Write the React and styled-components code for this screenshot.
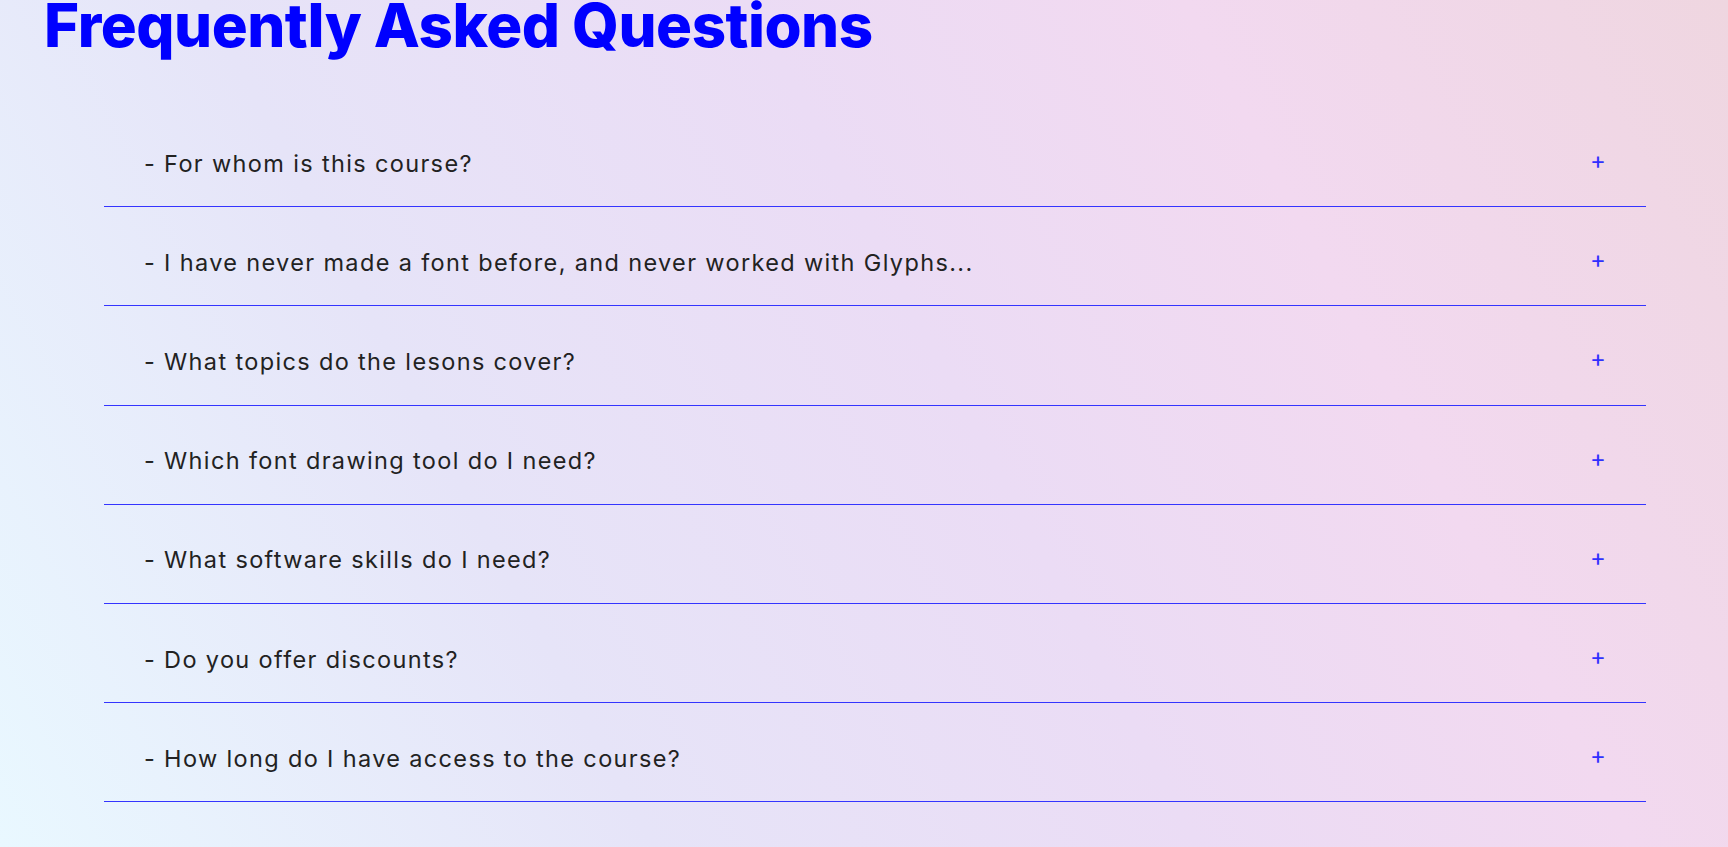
import React from "react";
import styled, { createGlobalStyle } from "styled-components";

const Global = createGlobalStyle`
  html, body { margin: 0; padding: 0; }
  body {
    width: 1728px;
    height: 847px;
    overflow: hidden;
    font-family: Inter, "Open Sans", sans-serif;
    background: linear-gradient(62deg, #e9f8ff 0%, #e6e4f8 30%, #ebdcf5 55%, #f2d9f0 75%, #efd6e0 100%);
  }
`;

const Page = styled.main`
  display: flex;
  flex-direction: column;
  height: 847px;
`;

const Title = styled.h1`
  margin: 0;
  padding: 0 0 0 44px;
  font-family: Inter, "Open Sans", sans-serif;
  font-weight: 800;
  font-size: 60px;
  line-height: 50px;
  letter-spacing: -0.5px;
  color: #0000ff;
`;

const List = styled.ul`
  list-style: none;
  margin: 58px 0 0 104px;
  padding: 0;
  width: 1542px;
`;

const Item = styled.li`
  display: flex;
  align-items: center;
  justify-content: space-between;
  box-sizing: border-box;
  height: 99.2px;
  padding: 12px 40px 0 40px;
  border-bottom: 1px solid #3434ff;
`;

const Question = styled.span`
  font-size: 23.5px;
  font-weight: 400;
  letter-spacing: 1.35px;
  color: #222222;
`;

const Plus = styled.span`
  font-size: 24px;
  font-weight: 400;
  color: #3030ff;
  line-height: 1;
  margin-bottom: 4px;
`;

const questions = [
  "- For whom is this course?",
  "- I have never made a font before, and never worked with Glyphs...",
  "- What topics do the lesons cover?",
  "- Which font drawing tool do I need?",
  "- What software skills do I need?",
  "- Do you offer discounts?",
  "- How long do I have access to the course?",
];

export default function App() {
  return (
    <Page>
      <Global />
      <Title>Frequently Asked Questions</Title>
      <List>
        {questions.map((q) => (
          <Item key={q}>
            <Question>{q}</Question>
            <Plus>+</Plus>
          </Item>
        ))}
      </List>
    </Page>
  );
}
